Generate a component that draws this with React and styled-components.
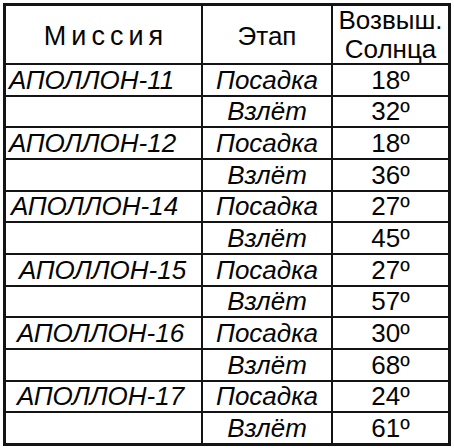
import React from "react";
import styled, { createGlobalStyle } from "styled-components";

const GlobalStyle = createGlobalStyle`
  html, body {
    margin: 0;
    padding: 0;
    background: #ffffff;
  }
  body {
    font-family: "Liberation Sans", Arial, Helvetica, sans-serif;
    color: #050505;
  }
`;

const rows = [
  { mission: "АПОЛЛОН-11", indent: 3, land: "18º", launch: "32º" },
  { mission: "АПОЛЛОН-12", indent: 3, land: "18º", launch: "36º" },
  { mission: "АПОЛЛОН-14", indent: 5, land: "27º", launch: "45º" },
  { mission: "АПОЛЛОН-15", indent: 13, land: "27º", launch: "57º" },
  { mission: "АПОЛЛОН-16", indent: 11, land: "30º", launch: "68º" },
  { mission: "АПОЛЛОН-17", indent: 11, land: "24º", launch: "61º" },
];

const Page = styled.div`
  padding: 3px 0 0 3px;
`;

const Table = styled.div`
  width: 448px;
  height: 443px;
  box-sizing: border-box;
  padding: 3px;
  background: #141414;
  display: grid;
  grid-template-columns: 195px 128px 115px;
  grid-template-rows: 57px repeat(12, 1fr);
  column-gap: 2px;
  row-gap: 2px;
`;

const HeadCell = styled.div`
  background: #ffffff;
  display: flex;
  align-items: center;
  justify-content: center;
  text-align: center;
  font-size: ${(p) => p.$size || 26}px;
  line-height: 29px;
  letter-spacing: ${(p) => p.$spacing || 0}px;
  padding-left: ${(p) => p.$spacing || 0}px;
  padding-top: ${(p) => p.$drop || 0}px;
  box-sizing: border-box;
`;

const Cell = styled.div`
  background: #ffffff;
  display: flex;
  align-items: center;
  justify-content: ${(p) => (p.$left ? "flex-start" : "center")};
  padding-left: ${(p) => p.$indent || 0}px;
  font-size: 26px;
  font-style: ${(p) => (p.$italic ? "italic" : "normal")};
  line-height: 1;
  white-space: nowrap;
  box-sizing: border-box;
`;

export default function App() {
  return (
    <>
      <GlobalStyle />
      <Page>
        <Table>
          <HeadCell $size={27} $spacing={5} $drop={4}>
            Миссия
          </HeadCell>
          <HeadCell $drop={4}>Этап</HeadCell>
          <HeadCell>
            Возвыш.
            <br />
            Солнца
          </HeadCell>
          {rows.map((r) => (
            <React.Fragment key={r.mission}>
              <Cell $left $italic $indent={r.indent}>
                {r.mission}
              </Cell>
              <Cell $italic>Посадка</Cell>
              <Cell>{r.land}</Cell>
              <Cell />
              <Cell $italic>Взлёт</Cell>
              <Cell>{r.launch}</Cell>
            </React.Fragment>
          ))}
        </Table>
      </Page>
    </>
  );
}
